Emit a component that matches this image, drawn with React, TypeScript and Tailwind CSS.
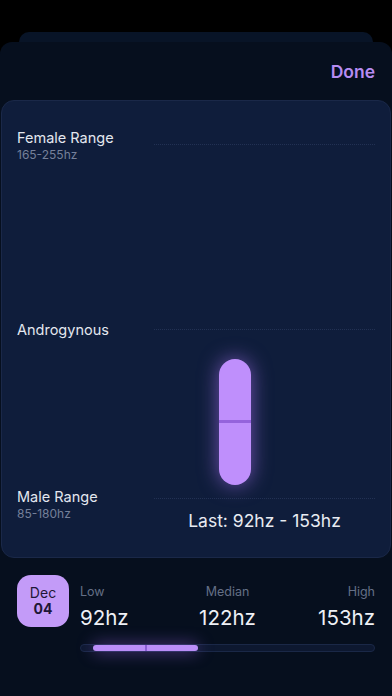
import React from 'react';

const stats = [
  { label: 'Low', value: '92hz', align: 'text-left' },
  { label: 'Median', value: '122hz', align: 'text-center' },
  { label: 'High', value: '153hz', align: 'text-right' },
];

function DottedLine() {
  return <div className="h-0 border-t-[1.5px] border-dotted border-[#223153]" />;
}

export default function App() {
  return (
    <div
      className="w-[392px] h-[696px] overflow-hidden bg-black pt-[32px]"
      style={{ fontFamily: 'Inter, "Noto Sans", sans-serif' }}
    >
      {/* stacked sheet behind */}
      <div className="mx-[19px] h-[10px] rounded-t-[10px] bg-[#081427]" />

      <div className="h-[654px] rounded-t-[12px] bg-[#060f1e] flex flex-col">
        <div className="flex justify-end pt-[19px] pb-[17px] pr-[17px]">
          <button className="text-[17.5px] leading-[22px] font-semibold text-[#b68cf2]">Done</button>
        </div>

        {/* chart card */}
        <div className="relative mx-[1px] h-[458px] rounded-[13px] border border-[#1a2848] bg-[#0f1d3b] pt-[28px] pl-[15px] pr-[15px]">
          <div className="flex">
            <div className="w-[137px]">
              <div className="text-[14.5px] leading-[18px] text-[#e3e7ef]">Female Range</div>
              <div className="text-[12px] leading-[16px] text-[#75809a]">165-255hz</div>
            </div>
            <div className="flex-1 pt-[15px]">
              <DottedLine />
            </div>
          </div>

          <div className="flex mt-[158px]">
            <div className="w-[137px] text-[14.5px] leading-[18px] text-[#e3e7ef]">Androgynous</div>
            <div className="flex-1 pt-[8px]">
              <DottedLine />
            </div>
          </div>

          <div className="flex mt-[149px]">
            <div className="w-[137px]">
              <div className="text-[14.5px] leading-[18px] text-[#e3e7ef]">Male Range</div>
              <div className="text-[12px] leading-[16px] text-[#75809a]">85-180hz</div>
            </div>
            <div className="flex-1 pt-[10px]">
              <DottedLine />
              <div className="mt-[11px] text-center text-[17.5px] leading-[22px] text-[#e8ebf2]">Last: 92hz - 153hz</div>
            </div>
          </div>

          {/* range pill */}
          <div className="absolute left-[217px] top-[258px] w-[32px] h-[126px] rounded-full bg-[#bf8ffc] shadow-[0_0_20px_rgba(178,120,255,0.6)] flex flex-col">
            <div className="h-[61px]" />
            <div className="h-[3px] bg-[#9563dc]" />
          </div>
        </div>

        {/* summary row */}
        <div className="flex gap-[11px] px-[17px] mt-[17px]">
          <div className="w-[52px] h-[52px] rounded-[14px] bg-[#c39bf8] flex flex-col items-center justify-center text-[#1e1736]">
            <div className="text-[14px] leading-[16px]">Dec</div>
            <div className="text-[14px] leading-[16px] font-bold">04</div>
          </div>
          <div className="flex-1 pt-[9px]">
            <div className="grid grid-cols-3">
              {stats.map((s) => (
                <div key={s.label} className={s.align}>
                  <div className="text-[12.5px] leading-[16px] text-[#646f86]">{s.label}</div>
                  <div className="mt-[5px] text-[20.5px] leading-[26px] text-[#eef0f5]">{s.value}</div>
                </div>
              ))}
            </div>
            <div className="mt-[13px] h-[8px] rounded-full border border-[#1a2847] bg-[#0d1830] flex items-center">
              <div className="ml-[12px] w-[105px] h-[6px] rounded-full bg-[#bb8ef8] shadow-[0_0_16px_rgba(170,110,255,0.65)] flex">
                <div className="w-[52px]" />
                <div className="w-[2px] bg-[#8d5fd6]" />
              </div>
            </div>
          </div>
        </div>
      </div>
    </div>
  );
}
